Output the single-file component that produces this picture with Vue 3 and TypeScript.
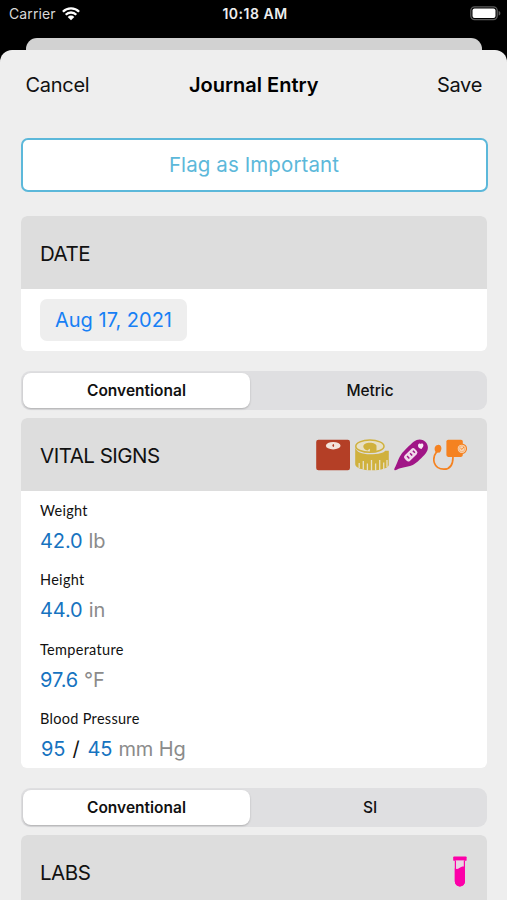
<script setup lang="ts">
import { ref } from 'vue'

interface Reading {
  label: string
  values: string[]
  unit: string
}

const date = ref('Aug 17, 2021')
const vitalUnit = ref('Conventional')
const labUnit = ref('Conventional')
const vitalUnits: string[] = ['Conventional', 'Metric']
const labUnits: string[] = ['Conventional', 'SI']

const readings: Reading[] = [
  { label: 'Weight', values: ['42.0'], unit: 'lb' },
  { label: 'Height', values: ['44.0'], unit: 'in' },
  { label: 'Temperature', values: ['97.6'], unit: '°F' },
  { label: 'Blood Pressure', values: ['95', '45'], unit: 'mm Hg' },
]
</script>

<template>
  <div class="screen">
    <header class="status">
      <div class="status-left">
        <span class="carrier">Carrier</span>
        <svg class="wifi" viewBox="0 0 18 14" width="18" height="14">
          <path d="M0.9 4.700a11.500 11.500 0 0 1 16.200 0" />
          <path d="M3.700 7.700a7.500 7.500 0 0 1 10.600 0" />
          <path class="solid" d="M9 13.200 5.700 9.900a4.700 4.700 0 0 1 6.600 0z" />
        </svg>
      </div>
      <span class="clock">10:18 AM</span>
      <svg class="battery" viewBox="0 0 31 15" width="31" height="15">
        <rect x="0.8" y="0.8" width="26.4" height="12.8" rx="3.8" fill="none" stroke="#5c5c5c" stroke-width="1.3" />
        <rect x="2.5" y="2.5" width="23" height="9.4" rx="2" fill="#fff" />
        <path d="M28.6 5v4.6c1.2-.4 1.8-1.2 1.8-2.3s-.6-1.900-1.800-2.300z" fill="#5c5c5c" />
      </svg>
    </header>

    <div class="back-sheet"></div>

    <main class="sheet">
      <nav class="nav">
        <span class="cancel">Cancel</span>
        <h1>Journal Entry</h1>
        <span class="save">Save</span>
      </nav>

      <button class="flag" type="button"><span>Flag as Important</span></button>

      <section class="card date-card">
        <div class="card-head"><h2>DATE</h2></div>
        <div class="date-body"><span class="chip">{{ date }}</span></div>
      </section>

      <div class="segment">
        <span v-for="u in vitalUnits" :key="u" class="option" :class="{ active: u === vitalUnit }" @click="vitalUnit = u">{{ u }}</span>
      </div>

      <section class="card vitals">
        <div class="card-head">
          <h2>VITAL SIGNS</h2>
          <div class="icons">
            <svg viewBox="0 0 34 32" width="34" height="32">
              <rect x="0.2" y="0.7" width="33.800" height="30.600" rx="2.200" fill="#b43f26" />
              <ellipse cx="17.200" cy="6.700" rx="7.300" ry="3.700" fill="#f3e5dc" />
              <path d="M17.300 5v3M16.500 6.500h1.600" stroke="#b43f26" stroke-width="1" />
            </svg>
            <svg viewBox="0 0 34 32" width="34" height="32">
              <path d="M.2 7.500C.6 13 7 15.300 15 15.300c8.500 0 14-1.500 15.100-3.600h3.700v14.300c0 3-8 5.300-16.700 5.300C7.700 31.300.2 28.800.2 25.200z" fill="#d0b13d" />
              <ellipse cx="14.900" cy="7.200" rx="14.100" ry="6.100" fill="#e7e0c6" stroke="#d0b13d" stroke-width="1.500" />
              <path d="M8.300 7.500c0-2.300 2.900-3.700 6.600-3.700s6.600 1.400 6.600 3.200v5.700c-1.800.5-4 .6-6.600.6V9.700c-1 .2-1.700.9-2.200 1.800C10 11 8.300 9.400 8.300 7.500z" fill="#d0b13d" />
              <path d="M4.200 24v5M8.300 22v8.500M12.400 24.500v7M16.500 21v11M20.600 24.500v7M24.700 21v10M28.700 23.500v7M32 21v7" stroke="#e6dfc8" stroke-width="1.300" />
            </svg>
            <svg viewBox="0 0 34 32" width="34" height="32">
              <path d="M.5 31c-.8-.5.5-2.500 1.400-4.500 1.700-3.600 3-8.300 5.200-11.100C10.200 11.500 15.800 6 20 2.600c3.400-2.700 8.100-2.800 11.300.2 3.300 3.100 3.400 7.800.5 11.400C28.200 18.500 23 23.600 18.800 26c-3.200 1.700-8.800 2-12.600 3.200C3.500 30.100 1.500 31.700.5 31z" fill="#a01586" />
              <rect x="9.600" y="12" width="14.200" height="7.600" rx="2.600" transform="rotate(-44 16.700 15.800)" fill="#f0daea" />
              <path d="M13.100 17.100l2.200 2.300M16.100 14.300l2.100 2.200M18.900 11.700l2 2.100" stroke="#a01586" stroke-width="1.500" />
              <path d="M24 5.900c.8-1.500 2.200-1.800 2.900-.9 1-.9 2.500-.3 2.500 1.200 0 1.300-.9 2.400-1.900 3.800-2.100-.3-3.800-2.100-3.500-4.100z" fill="#f8e8f4" />
            </svg>
            <svg viewBox="0 0 34 32" width="34" height="32">
              <path d="M3.800 12.500C-1.700 19.800.5 30.200 11 30.200c6.500 0 9-4.700 9-12.500" fill="none" stroke="#f58220" stroke-width="1.700" />
              <path d="M3.400 13.700C.5 11.100 1.200 6.400 4.800 5.900c4-.5 4.600 4.600 2.100 7.600z" fill="#f58220" />
              <rect x="13.400" y=".7" width="16.400" height="17.200" rx="1.800" fill="#f58220" />
              <circle cx="28.800" cy="9.800" r="4.700" fill="#f7d5b5" stroke="#f58220" stroke-width="1.100" />
              <circle cx="28.800" cy="9.800" r="3" fill="none" stroke="#f4a45f" stroke-width=".7" />
              <path d="M27.300 9l1.700 1.400 1.900-2.400" fill="none" stroke="#f58220" stroke-width=".9" />
            </svg>
          </div>
        </div>
        <div class="readings">
          <div v-for="r in readings" :key="r.label" class="reading" :class="{ pair: r.values.length > 1 }">
            <span class="label">{{ r.label }}</span>
            <div class="value-row">
              <template v-for="(v, i) in r.values" :key="i">
                <span v-if="i > 0" class="slash">/</span>
                <span class="value">{{ v }}</span>
              </template>
              <span class="unit">{{ r.unit }}</span>
            </div>
          </div>
        </div>
      </section>

      <div class="segment">
        <span v-for="u in labUnits" :key="u" class="option" :class="{ active: u === labUnit }" @click="labUnit = u">{{ u }}</span>
      </div>

      <section class="card labs">
        <div class="card-head">
          <h2>LABS</h2>
          <svg class="tube" viewBox="0 0 14 31" width="14" height="31">
            <rect x=".2" y=".4" width="13.400" height="4.400" rx=".9" fill="#fc00a8" />
            <path d="M2.400 4.500v20.800a4.500 4.500 0 0 0 9 0V4.500" fill="#e8d5e2" stroke="#fc00a8" stroke-width="1.200" />
            <path d="M1.800 12.200c1.600 1.200 3.200.9 4.500-.2 1.400-1.300 3.700-1.900 5.700-1.400v14.700a5.100 5.100 0 0 1-10.200 0z" fill="#fc00a8" />
          </svg>
        </div>
      </section>
    </main>
  </div>
</template>

<style>
body {
  margin: 0;
  background: #000;
  overflow: hidden;
}
</style>

<style scoped>
.screen {
  width: 507px;
  height: 900px;
  overflow: hidden;
  background: #000;
  font-family: Inter, Roboto, "Liberation Sans", sans-serif;
  color: #111;
  display: flex;
  flex-direction: column;
}
.status {
  flex: none;
  height: 38px;
  box-sizing: border-box;
  padding: 0 6px 11px 9px;
  display: grid;
  grid-template-columns: 1fr auto 1fr;
  align-items: center;
  color: #eee;
  font-size: 14px;
  line-height: 27px;
}
.status-left {
  display: flex;
  align-items: center;
  gap: 6px;
}
.carrier { color: #d8d8d8; letter-spacing: .1px; }
.wifi {
  fill: none;
  stroke: #fff;
  stroke-width: 2.300px;
}
.wifi .solid { fill: #fff; stroke: none; }
.clock { font-weight: 600; letter-spacing: .5px; }
.battery { justify-self: end; }
.back-sheet {
  flex: none;
  height: 12px;
  margin: 0 25px 0 26px;
  border-radius: 11px 11px 0 0;
  background: #d2d2d2;
}
.sheet {
  flex: none;
  height: 850px;
  box-sizing: border-box;
  padding: 0 20px 0 21px;
  border-radius: 12px 12px 0 0;
  background: #eee;
}
.nav {
  height: 88px;
  box-sizing: border-box;
  padding: 0 5px 19px 4.500px;
  display: grid;
  grid-template-columns: 1fr auto 1fr;
  align-items: center;
  font-size: 20px;
  letter-spacing: -.3px;
}
.save { justify-self: end; }
h1, h2 { margin: 0; }
h1 { font-size: 20px; font-weight: 600; letter-spacing: 0; color: #000; }
h2 { font-size: 20.500px; font-weight: 400; letter-spacing: -.5px; }
.flag {
  display: block;
  width: 467px;
  height: 54px;
  margin-left: -.5px;
  padding: 0 0 1px;
  border: 2.500px solid #5cb8da;
  border-radius: 7px;
  background: #fff;
  color: #5cb8da;
  font: 400 20.500px Inter, sans-serif;
  letter-spacing: .1px;
}
.card {
  border-radius: 6px;
  overflow: hidden;
  background: #fff;
}
.card-head {
  height: 73px;
  box-sizing: border-box;
  padding: 0 20px 0 19px;
  display: flex;
  align-items: center;
  justify-content: space-between;
  background: #ddd;
}
.card-head h2 { padding-top: 2px; }
.date-card { margin-top: 24px; height: 135px; }
.date-body {
  padding: 10px 19px;
  display: flex;
}
.chip {
  width: 147px;
  height: 42px;
  border-radius: 7px;
  background: #eee;
  color: #1780f5;
  font-size: 20px;
  line-height: 43px;
  text-align: center;
}
.segment {
  height: 39px;
  margin-top: 20px;
  box-sizing: border-box;
  padding: 2px;
  border-radius: 9px;
  display: grid;
  grid-template-columns: 227px 1fr;
  background: #dfdfe1;
}
.option {
  display: flex;
  align-items: center;
  justify-content: center;
  padding-left: 5px;
  font-size: 15.500px;
  font-weight: 500;
  letter-spacing: -.1px;
}
.option.active {
  padding-left: 0;
  font-weight: 600;
  letter-spacing: 0;
  border-radius: 8px;
  background: #fff;
  box-shadow: 0 1px 2px rgba(0, 0, 0, .22);
}
.vitals { margin-top: 8px; height: 350px; }
.icons { display: flex; gap: 5px; }
.readings { padding: 10px 19px 0; }
.reading { height: 69.300px; }
.label {
  display: block;
  height: 20px;
  line-height: 20px;
  font-family: Lato, "Open Sans", sans-serif;
  font-size: 14.500px;
  letter-spacing: .3px;
}
.value-row {
  height: 39px;
  line-height: 40px;
  font-size: 20px;
  letter-spacing: -.1px;
  display: flex;
}
.value { color: #1673c0; }
.unit { color: #8b8b8b; margin-left: 6px; }
.slash { margin: 0 8px 0 7px; }
.pair .value-row { padding-left: 1px; }
.labs { margin-top: 8px; height: 100px; }
</style>
